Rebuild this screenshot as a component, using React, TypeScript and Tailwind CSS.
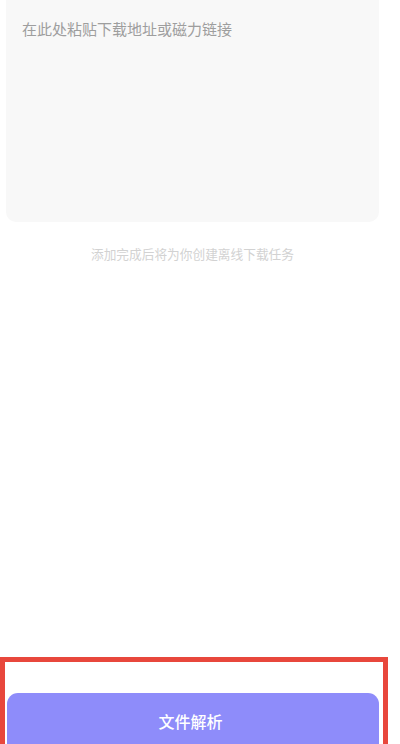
export default function App() {
  const font = { fontFamily: '"Noto Sans CJK SC", "Noto Sans", sans-serif' };
  return (
    <div className="relative flex h-[744px] w-[400px] flex-col overflow-hidden bg-white" style={font}>
      <div className="ml-[6px] h-[222px] w-[373px] rounded-b-[10px] bg-[#f8f8f8] px-[16px] pt-[18px]">
        <p className="text-[15px] leading-[22px] text-[#9e9e9e]">在此处粘贴下载地址或磁力链接</p>
      </div>
      <p className="ml-[6px] mt-[24px] w-[373px] text-center text-[12.7px] leading-[16px] text-[#d2d2d2]">
        添加完成后将为你创建离线下载任务
      </p>
      <div className="mt-auto ml-[7px] flex h-[51px] w-[372px] items-center justify-center rounded-t-[11px] bg-[#8e8cfa] pt-[5px] pr-[5px]">
        <span className="text-[16px] font-medium leading-[20px] text-white">文件解析</span>
      </div>
      <div className="absolute left-0 top-[657px] h-[120px] w-[388px] border-[5px] border-[#e8473c]" />
    </div>
  );
}
